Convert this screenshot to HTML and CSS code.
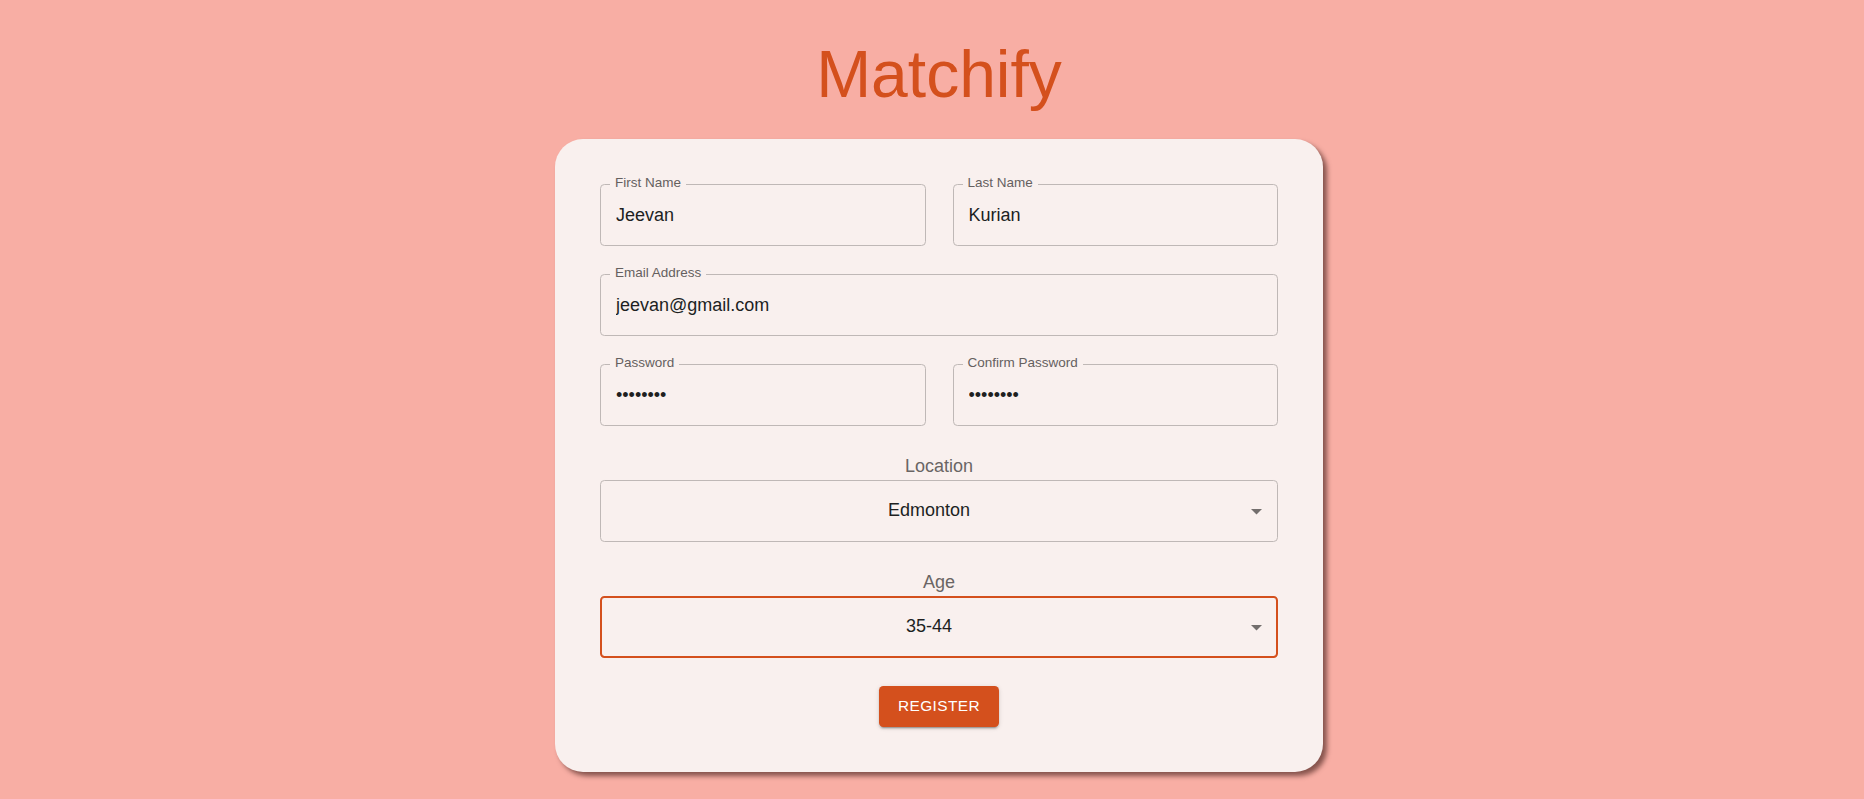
FILE: index.html
```html
<!DOCTYPE html>
<html lang="en">
<head>
<meta charset="utf-8">
<title>Matchify</title>
<link rel="stylesheet" href="styles.css">
</head>
<body>
<main class="page">
  <h1 class="title">Matchify</h1>
  <form class="card">
    <div class="row">
      <div class="field">
        <label class="field-label">First Name</label>
        <input class="field-input" type="text" value="Jeevan">
      </div>
      <div class="field">
        <label class="field-label">Last Name</label>
        <input class="field-input" type="text" value="Kurian">
      </div>
    </div>
    <div class="field">
      <label class="field-label">Email Address</label>
      <input class="field-input" type="email" value="jeevan@gmail.com">
    </div>
    <div class="row">
      <div class="field">
        <label class="field-label">Password</label>
        <input class="field-input" type="password" value="12345678">
      </div>
      <div class="field">
        <label class="field-label">Confirm Password</label>
        <input class="field-input" type="password" value="12345678">
      </div>
    </div>
    <div class="select-group">
      <div class="select-label">Location</div>
      <div class="select">
        <span class="select-value">Edmonton</span>
        <svg class="select-arrow" viewBox="0 0 10 5" width="11" height="5.5"><path d="M0 0L5 5L10 0Z"/></svg>
      </div>
    </div>
    <div class="select-group">
      <div class="select-label">Age</div>
      <div class="select select-focused">
        <span class="select-value">35-44</span>
        <svg class="select-arrow" viewBox="0 0 10 5" width="11" height="5.5"><path d="M0 0L5 5L10 0Z"/></svg>
      </div>
    </div>
    <button class="register" type="button">Register</button>
  </form>
</main>
</body>
</html>
```

FILE: styles.css
```css
* {
  box-sizing: border-box;
}

body {
  margin: 0;
  background: #f8aea4;
  font-family: "Liberation Sans", Arial, sans-serif;
  color: #201f1f;
}

.page {
  display: flex;
  flex-direction: column;
  align-items: center;
  padding: 35px 0 40px 14px;
}

.title {
  margin: 0;
  font-size: 66px;
  line-height: 79px;
  font-weight: 400;
  color: #d4501d;
}

.card {
  margin-top: 25px;
  width: 768px;
  padding: 45px;
  background: #f9f0ee;
  border-radius: 28px;
  box-shadow: 4px 4px 5px rgba(40, 10, 5, 0.55);
  display: flex;
  flex-direction: column;
  gap: 28px;
}

.row {
  display: grid;
  grid-template-columns: 1fr 1fr;
  gap: 27px;
}

.field {
  position: relative;
  height: 62px;
  border: 1px solid #bfb8b6;
  border-radius: 4.4px;
}

.field-label {
  position: absolute;
  top: -10px;
  left: 9px;
  padding: 0 5px;
  background: #f9f0ee;
  font-size: 13.5px;
  line-height: 16px;
  color: #65605f;
}

.field-input {
  display: block;
  width: 100%;
  height: 100%;
  padding: 0 15px;
  border: none;
  background: transparent;
  outline: none;
  font-family: inherit;
  font-size: 18px;
  color: #201f1f;
}

.select-group {
  display: flex;
  flex-direction: column;
}

.select-label {
  text-align: center;
  font-size: 18px;
  line-height: 24px;
  padding-bottom: 2px;
  color: #6a6564;
}

.select {
  position: relative;
  height: 62px;
  border: 1px solid #bfb8b6;
  border-radius: 4.4px;
  display: flex;
  align-items: center;
  justify-content: center;
  padding: 0 35px 2px 15px;
  font-size: 18px;
  color: #201f1f;
}

.select-focused {
  border: 2px solid #d4501d;
}

.select-arrow {
  position: absolute;
  right: 15px;
  top: 28px;
  fill: #736e6d;
}

.select-focused .select-arrow {
  right: 14px;
  top: 27px;
}

.register {
  align-self: center;
  height: 41px;
  padding: 0 19px 1px;
  border: none;
  border-radius: 4.4px;
  background: #d4501d;
  color: #ffffff;
  font-family: inherit;
  font-size: 15.4px;
  letter-spacing: 0.44px;
  text-transform: uppercase;
  box-shadow: 0 3px 1px -2px rgba(0, 0, 0, 0.2), 0 2px 2px 0 rgba(0, 0, 0, 0.14), 0 1px 5px 0 rgba(0, 0, 0, 0.12);
  cursor: pointer;
}
```
